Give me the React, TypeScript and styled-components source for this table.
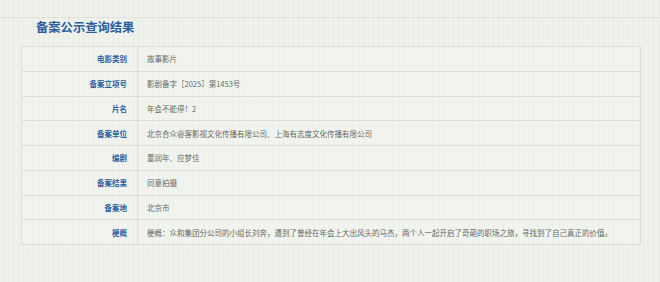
import styled, { createGlobalStyle } from "styled-components";

type Record = {
  label: string;
  value: string;
};

const records: Record[] = [
  { label: "电影类别", value: "故事影片" },
  { label: "备案立项号", value: "影剧备字［2025］第1453号" },
  { label: "片名", value: "年会不能停！2" },
  {
    label: "备案单位",
    value: "北京合众睿客影视文化传播有限公司、上海有志度文化传播有限公司",
  },
  { label: "编剧", value: "董润年、应梦佳" },
  { label: "备案结果", value: "同意拍摄" },
  { label: "备案地", value: "北京市" },
  {
    label: "梗概",
    value:
      "梗概：众和集团分公司的小组长刘奔，遇到了曾经在年会上大出风头的马杰，两个人一起开启了奇葩的职场之旅，寻找到了自己真正的价值。",
  },
];

const GlobalStyle = createGlobalStyle`
  html, body {
    margin: 0;
    padding: 0;
  }
  body {
    width: 660px;
    height: 282px;
    overflow: hidden;
    background-color: #eef0ea;
    background-image: repeating-linear-gradient(
      90deg,
      rgba(255, 255, 255, 0.18) 0px,
      rgba(255, 255, 255, 0.18) 1px,
      rgba(0, 0, 0, 0.006) 3px,
      rgba(0, 0, 0, 0.006) 5px
    );
    font-family: "Noto Sans CJK SC", "Noto Sans", sans-serif;
  }
`;

const Section = styled.section`
  margin-top: 17px;
  border-top: 1px solid #dfe1da;
`;

const Title = styled.h2`
  margin: 0;
  padding: 1px 0 0 36px;
  height: 27px;
  font-size: 12.3px;
  line-height: 17px;
  font-weight: 700;
  color: #2b5f9d;
`;

const Table = styled.table`
  margin: 0 20px 0 21px;
  width: 620px;
  border-collapse: collapse;
  background: rgba(246, 247, 243, 0.4);
  border: 1px solid #dcddd6;
`;

const Row = styled.tr`
  height: 24.75px;
  border-bottom: 1px solid #dcddd6;
`;

const Label = styled.th`
  width: 105px;
  padding: 0 10px 0 0;
  text-align: right;
  font-size: 7.5px;
  font-weight: 700;
  color: #2d62a4;
  border-right: 1px solid #dcddd6;
`;

const Value = styled.td`
  padding: 0 0 0 9px;
  text-align: left;
  font-size: 7.5px;
  color: #666a66;
`;

export default function App() {
  return (
    <>
      <GlobalStyle />
      <Section>
        <Title>备案公示查询结果</Title>
        <Table>
          <tbody>
            {records.map((r) => (
              <Row key={r.label}>
                <Label>{r.label}</Label>
                <Value>{r.value}</Value>
              </Row>
            ))}
          </tbody>
        </Table>
      </Section>
    </>
  );
}
